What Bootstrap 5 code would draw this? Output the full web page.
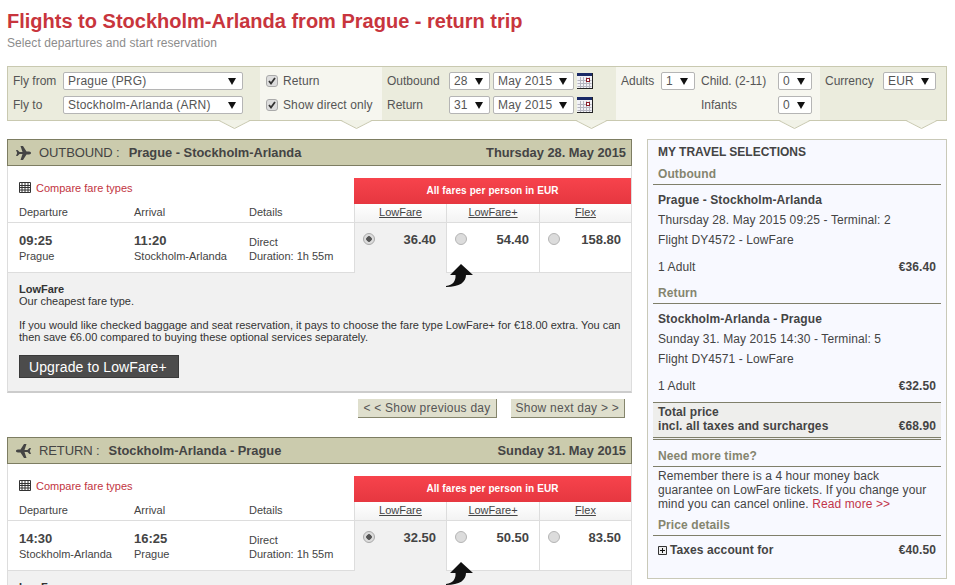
<!DOCTYPE html>
<html lang="en">
<head>
<meta charset="utf-8">
<title>Flights to Stockholm-Arlanda from Prague</title>
<link href="https://cdn.jsdelivr.net/npm/bootstrap@5.3.0/dist/css/bootstrap.min.css" rel="stylesheet">
<style>
html,body{height:585px;overflow:hidden}
body{font-family:"Liberation Sans",Arial,sans-serif;font-size:12px;line-height:14px;color:#444;background:#fff}
.page{padding:0 8px 0 7px}
.page-title{font-size:20px;line-height:24px;font-weight:700;color:#c8353d;margin:9px 0 0}
.page-sub{color:#8c8c8c;line-height:14px;margin:3px 0 0;letter-spacing:.08px}
.search{margin-top:16px;height:55px;border:1px solid #c9c9b0;position:relative}
.seg{padding:2px 0 0 5px;position:relative;background:#ebecdd;height:53px}
.seg.alt{background:#f6f6ef}
.seg::after{content:"";position:absolute;top:100%;width:31px;height:10px;right:var(--n);background:url("data:image/svg+xml,%3Csvg xmlns='http://www.w3.org/2000/svg' width='31' height='10'%3E%3Cpath d='M0 0 15.500 8.500 31 0z' fill='%23f1f2e7'/%3E%3Cpath d='M0 .5 15.500 8.500 31 .5' fill='none' stroke='%23c9c9b0'/%3E%3C/svg%3E") no-repeat}
.s1{width:252px;--n:10px}.s2{width:122px;--n:10px}.s3{width:234px;--n:9px}.s4{width:204px;--n:10px}.s5{flex:1;--n:9px}
.fld{height:24px;display:flex;align-items:center}
.fld label{color:#555}
.pick{height:18px;padding:0 0 0 4px;border:1px solid #b5b5b5;border-radius:2px;font-size:12px;line-height:16px;color:#555;letter-spacing:.2px;font-family:inherit;background-color:#fff;background-size:8px 7px;background-position:right 6px center;background-image:url("data:image/svg+xml,%3Csvg xmlns='http://www.w3.org/2000/svg' viewBox='0 0 8 7'%3E%3Cpath d='M0 0h8L4 7z' fill='%23111'/%3E%3C/svg%3E");box-shadow:none}
.chk{width:12px;height:12px;margin:0 5px 0 1px;border:1px solid #aaa;border-radius:2px;background-color:#ddd;background-size:10px;flex:none}
.chk:checked{background-color:#ddd;border-color:#aaa;background-image:url("data:image/svg+xml,%3Csvg xmlns='http://www.w3.org/2000/svg' viewBox='0 0 10 10'%3E%3Cpath d='M2 5l2 2.500L8 2' fill='none' stroke='%23333' stroke-width='1.800'/%3E%3C/svg%3E")}
.chk-label{color:#555;letter-spacing:.1px}
.cols{display:flex;margin-top:18px;gap:15px}
.left-col{width:625px;flex:none}
.right-col{width:300px;flex:none}
.f-head{height:27px;border:1px solid #7d7d62;background:#cbcbad;padding:0 5px 0 8px;display:flex;align-items:center;color:#444;font-size:13px}
.f-head b{font-size:12.85px}
.plane{margin-right:8px;flex:none}
.plane.flip{transform:scaleX(-1)}
.dir{margin-right:9px;letter-spacing:-.1px}
.f-body{display:flex;border-left:1px solid #ddd;border-right:1px solid #ddd;padding-top:12px;position:relative}
.f-info{width:346px;flex:none}
.cmp{height:26px;padding:0 0 7px 11px;display:flex;align-items:center;gap:5px;color:#c2353f;font-size:11px}
.lab-row,.time-row{display:flex;padding-left:11px}
.lab-row{height:19px;border-bottom:1px solid #ddd;font-size:11px;padding-top:1px}
.time-row{height:50px;border-bottom:1px solid #ddd;padding-top:11px;font-size:11px}
.c1{width:115px}.c2{width:115px}
.time-row b{display:block;font-size:13px;line-height:14px;margin-bottom:1px}
.time-row .det{padding-top:1px;line-height:14px}
.f-fares{flex:1;display:flex;flex-direction:column}
.red{height:26px;background:linear-gradient(#f7434c,#e63740);color:#fff;font-size:10px;letter-spacing:.1px;font-weight:700;text-align:center;line-height:25px}
.names,.prices{display:flex}
.names>div{height:19px;border-right:1px solid #ddd;border-bottom:1px solid #ddd;text-align:center;line-height:16px;font-size:11px;text-decoration:underline;background:linear-gradient(#fff,#f3f3f3)}
.prices>div{height:50px;border-right:1px solid #ddd;display:flex;justify-content:space-between;align-items:flex-start;padding:10px 10px 0 8px;border-bottom:1px solid #ddd}
.w1{width:93px;border-left:1px solid #ddd}.w2{width:93px}.w3{flex:1;border-right:0!important}
.prices>.sel{background:#f1f1f1;border-bottom:0}
.prices b{font-weight:700;font-size:13px;line-height:14px;color:#444}
.rad{width:12px;height:12px;margin:0;background-color:#dcdcdc;border:1px solid #b5b5b5;flex:none}
.rad:checked{background-color:#dcdcdc;border-color:#aaa;background-image:radial-gradient(circle,#555 0 2.500px,transparent 3px)}
.curl{position:absolute;left:438px;top:97px}
.panel{background:#f1f1f1;border-left:1px solid #ddd;border-right:1px solid #ddd;border-bottom:2px solid #ccc;height:120px;padding:10px 5px 0 11px;font-size:11px;line-height:12px;color:#333}
.panel p{margin:0 0 12px}
.up-btn{background:#4c4c4c;color:#fff;border:1px solid #3a3a3a;border-radius:0;font-size:14px;line-height:16px;letter-spacing:.1px;padding:2px 11px 2px 9px;height:23px;display:block}
.up-btn:hover{background:#4c4c4c;color:#fff}
.day-row{display:flex;justify-content:flex-end;gap:14px;padding:6px 7px 0 0;height:44px}
.day-btn{background:#dfdfcd;border:0;border-right:1px solid #85856c;border-bottom:1px solid #85856c;border-radius:0;height:19px;padding:0 5px;font-size:12px;line-height:18px;color:#555;letter-spacing:.24px}
.day-btn:hover{background:#dfdfcd;color:#555}
.sum{height:440px;border:1px solid #c9c9b8;background:#f8f9ff;padding:5px 5px 0;color:#444;letter-spacing:.1px}
.sum-title{font-weight:700;line-height:14px;padding-left:5px;letter-spacing:0}
.sum-h{font-weight:700;color:#85856f;padding:1px 5px 0;height:19px;line-height:14px;border-bottom:1px solid #7f7f6a}
.gap-top{margin-top:7px}.gap-a{margin-top:8px}.gap-b{margin-top:11px}.gap-c{margin-top:6px}
.sum-ln{padding:0 5px;line-height:20px}
.sum-ln.first{margin-top:5px}
.sum-row{display:flex;justify-content:space-between;padding:0 5px;line-height:14px;margin-top:10px}
.sum-total{background:#eeeeec;border-top:1px solid #7f7f6a;border-bottom:3px double #7f7f6a;font-weight:700;padding:2px 5px 0;line-height:14px;height:38px;margin-top:9px}
.sum-total>div{display:flex;justify-content:space-between}
.sum-txt{padding:2px 13px 0 5px;line-height:14px}
.sum-txt span{color:#c2354a}
.tax{font-weight:700;display:flex;justify-content:space-between;padding:7px 5px 0}
.tax svg{margin-right:3px;vertical-align:-1px}
</style>
</head>
<body>
<div class="page">
  <h1 class="page-title">Flights to Stockholm-Arlanda from Prague - return trip</h1>
  <p class="page-sub">Select departures and start reservation</p>

  <form class="search d-flex">
    <div class="seg s1">
      <div class="fld"><label style="width:50px">Fly from</label><select class="form-select pick" style="width:180px"><option>Prague (PRG)</option></select></div>
      <div class="fld"><label style="width:50px">Fly to</label><select class="form-select pick" style="width:180px"><option>Stockholm-Arlanda (ARN)</option></select></div>
    </div>
    <div class="seg alt s2">
      <div class="fld"><input class="form-check-input chk mt-0" type="checkbox" checked><span class="chk-label">Return</span></div>
      <div class="fld"><input class="form-check-input chk mt-0" type="checkbox" checked><span class="chk-label">Show direct only</span></div>
    </div>
    <div class="seg s3">
      <div class="fld"><label style="width:62px">Outbound</label><select class="form-select pick" style="width:41px;margin-right:3px"><option>28</option></select><select class="form-select pick" style="width:81px;margin-right:3px"><option>May 2015</option></select>
        <svg width="16" height="16" viewBox="0 0 16 16"><rect width="15" height="15" fill="#f2f2f6"/><path d="M.5 7.500h14M.5 10.500h14M.5 13.500h14M3.500 4v11M6.500 4v11M9.500 4v11M12.500 4v11" stroke="#b5b5c0"/><rect width="15" height="3" fill="#1a2a66"/><rect x="9.500" y="5.500" width="3" height="3" fill="#fff" stroke="#8a1d2a"/><path d="M15.500 0v16M0 15.500h16" stroke="#222"/></svg></div>
      <div class="fld"><label style="width:62px">Return</label><select class="form-select pick" style="width:41px;margin-right:3px"><option>31</option></select><select class="form-select pick" style="width:81px;margin-right:3px"><option>May 2015</option></select>
        <svg width="16" height="16" viewBox="0 0 16 16"><rect width="15" height="15" fill="#f2f2f6"/><path d="M.5 7.500h14M.5 10.500h14M.5 13.500h14M3.500 4v11M6.500 4v11M9.500 4v11M12.500 4v11" stroke="#b5b5c0"/><rect width="15" height="3" fill="#1a2a66"/><rect x="9.500" y="5.500" width="3" height="3" fill="#fff" stroke="#8a1d2a"/><path d="M15.500 0v16M0 15.500h16" stroke="#222"/></svg></div>
    </div>
    <div class="seg alt s4">
      <div class="fld"><label style="width:40px">Adults</label><select class="form-select pick" style="width:34px;margin-right:6px"><option>1</option></select><label style="width:77px">Child. (2-11)</label><select class="form-select pick" style="width:34px"><option>0</option></select></div>
      <div class="fld"><label style="width:80px"></label><label style="width:77px">Infants</label><select class="form-select pick" style="width:34px"><option>0</option></select></div>
    </div>
    <div class="seg s5">
      <div class="fld"><label style="width:58px">Currency</label><select class="form-select pick" style="width:53px"><option>EUR</option></select></div>
    </div>
  </form>

  <div class="cols">
    <div class="left-col">
      <section>
        <div class="f-head">
          <svg class="plane" width="15" height="14" viewBox="0 0 15 14"><path d="M0 4H1.500L3.500 6H6.500L4.500 0H7L10.500 5.500H13C14.500 5.500 15 6.300 15 7S14.500 8.500 13 8.500H10.500L7 14H4.500L6.500 8H3.500L1.500 10H0L1.200 7z" fill="#444"/></svg>
          <span class="dir">OUTBOUND :</span><b>Prague - Stockholm-Arlanda</b>
          <b class="ms-auto">Thursday 28. May 2015</b>
        </div>
        <div class="f-body">
          <div class="f-info">
            <div class="cmp"><svg width="12" height="11" viewBox="0 0 12 11"><path d="M.5.500h11v10H.5zM.5 3.500h11M.5 5.500h11M.5 8h11M3 .500v10M6 .500v10M9 .500v10" fill="none" stroke="#333"/></svg>Compare fare types</div>
            <div class="lab-row"><span class="c1">Departure</span><span class="c2">Arrival</span><span>Details</span></div>
            <div class="time-row">
              <div class="c1"><b>09:25</b>Prague</div>
              <div class="c2"><b>11:20</b>Stockholm-Arlanda</div>
              <div class="det">Direct<br>Duration: 1h 55m</div>
            </div>
          </div>
          <div class="f-fares">
            <div class="red">All fares per person in EUR</div>
            <div class="names"><div class="w1">LowFare</div><div class="w2">LowFare+</div><div class="w3">Flex</div></div>
            <div class="prices">
              <div class="w1 sel"><input class="form-check-input rad" type="radio" name="o" checked><b>36.40</b></div>
              <div class="w2"><input class="form-check-input rad" type="radio" name="o"><b>54.40</b></div>
              <div class="w3"><input class="form-check-input rad" type="radio" name="o"><b>158.80</b></div>
            </div>
          </div>
          <svg class="curl" width="30" height="26" viewBox="0 0 30 26"><path d="M15 1 27 12H20C20 19 14 24 0 24V23C7 22 10 18 9.500 12H4z" fill="#111"/></svg>
        </div>
        <div class="panel">
          <p><strong>LowFare</strong><br>Our cheapest fare type.</p>
          <p>If you would like checked baggage and seat reservation, it pays to choose the fare type LowFare+ for €18.00 extra. You can then save €6.00 compared to buying these optional services separately.</p>
          <button type="button" class="btn up-btn">Upgrade to LowFare+</button>
        </div>
        <div class="day-row">
          <button type="button" class="btn day-btn">&lt; &lt; Show previous day</button>
          <button type="button" class="btn day-btn">Show next day &gt; &gt;</button>
        </div>
      </section>
      <section>
        <div class="f-head">
          <svg class="plane flip" width="15" height="14" viewBox="0 0 15 14"><path d="M0 4H1.500L3.500 6H6.500L4.500 0H7L10.500 5.500H13C14.500 5.500 15 6.300 15 7S14.500 8.500 13 8.500H10.500L7 14H4.500L6.500 8H3.500L1.500 10H0L1.200 7z" fill="#444"/></svg>
          <span class="dir">RETURN :</span><b>Stockholm-Arlanda - Prague</b>
          <b class="ms-auto">Sunday 31. May 2015</b>
        </div>
        <div class="f-body">
          <div class="f-info">
            <div class="cmp"><svg width="12" height="11" viewBox="0 0 12 11"><path d="M.5.500h11v10H.5zM.5 3.500h11M.5 5.500h11M.5 8h11M3 .500v10M6 .500v10M9 .500v10" fill="none" stroke="#333"/></svg>Compare fare types</div>
            <div class="lab-row"><span class="c1">Departure</span><span class="c2">Arrival</span><span>Details</span></div>
            <div class="time-row">
              <div class="c1"><b>14:30</b>Stockholm-Arlanda</div>
              <div class="c2"><b>16:25</b>Prague</div>
              <div class="det">Direct<br>Duration: 1h 55m</div>
            </div>
          </div>
          <div class="f-fares">
            <div class="red">All fares per person in EUR</div>
            <div class="names"><div class="w1">LowFare</div><div class="w2">LowFare+</div><div class="w3">Flex</div></div>
            <div class="prices">
              <div class="w1 sel"><input class="form-check-input rad" type="radio" name="r" checked><b>32.50</b></div>
              <div class="w2"><input class="form-check-input rad" type="radio" name="r"><b>50.50</b></div>
              <div class="w3"><input class="form-check-input rad" type="radio" name="r"><b>83.50</b></div>
            </div>
          </div>
          <svg class="curl" width="30" height="26" viewBox="0 0 30 26"><path d="M15 1 27 12H20C20 19 14 24 0 24V23C7 22 10 18 9.500 12H4z" fill="#111"/></svg>
        </div>
        <div class="panel"><p><strong>LowFare</strong></p></div>
      </section>
    </div>
    <aside class="right-col">
      <div class="sum">
        <div class="sum-title">MY TRAVEL SELECTIONS</div>
        <div class="sum-h gap-top">Outbound</div>
        <div class="sum-ln first"><b>Prague - Stockholm-Arlanda</b></div>
        <div class="sum-ln">Thursday 28. May 2015 09:25 - Terminal: 2</div>
        <div class="sum-ln">Flight DY4572 - LowFare</div>
        <div class="sum-row"><span>1 Adult</span><b>€36.40</b></div>
        <div class="sum-h gap-b">Return</div>
        <div class="sum-ln first"><b>Stockholm-Arlanda - Prague</b></div>
        <div class="sum-ln">Sunday 31. May 2015 14:30 - Terminal: 5</div>
        <div class="sum-ln">Flight DY4571 - LowFare</div>
        <div class="sum-row"><span>1 Adult</span><b>€32.50</b></div>
        <div class="sum-total"><div>Total price</div><div><span>incl. all taxes and surcharges</span><span>€68.90</span></div></div>
        <div class="sum-h gap-a">Need more time?</div>
        <div class="sum-txt">Remember there is a 4 hour money back guarantee on LowFare tickets. If you change your mind you can cancel online. <span>Read more &gt;&gt;</span></div>
        <div class="sum-h gap-c">Price details</div>
        <div class="tax"><span><svg width="9" height="9" viewBox="0 0 9 9"><path d="M.5.500h8v8h-8z" fill="#eee" stroke="#333"/><path d="M2 4.500h5M4.500 2v5" stroke="#111"/></svg>Taxes account for</span><span>€40.50</span></div>
      </div>
    </aside>
  </div>
</div>
</body>
</html>
